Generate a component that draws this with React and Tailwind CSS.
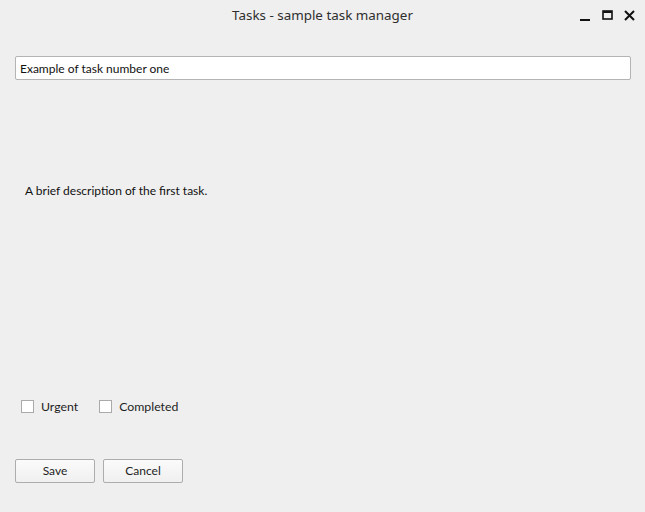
export default function App() {
  return (
    <div className="w-[645px] h-[512px] bg-[#efefef] flex flex-col text-[#1e1e1e]" style={{ fontFamily: '"Noto Sans", sans-serif' }}>
      {/* Title bar */}
      <div className="h-[30px] flex items-center relative shrink-0">
        <div className="flex-1 text-center text-[13.4px] text-[#2e2e2e] pt-[1px]">Tasks - sample task manager</div>
        <div className="absolute right-[10px] top-[8px] flex items-center gap-[11px]">
          <svg width="11" height="14" viewBox="0 0 11 14"><rect x="0" y="11" width="10" height="2" fill="#111" /></svg>
          <svg width="11" height="11" viewBox="0 0 11 11"><rect x="1" y="1" width="9" height="8" fill="none" stroke="#111" strokeWidth="1.6" /><rect x="1" y="1" width="9" height="2" fill="#111" /></svg>
          <svg width="11" height="11" viewBox="0 0 11 11"><path d="M1 1L10 10M10 1L1 10" stroke="#111" strokeWidth="2" /></svg>
        </div>
      </div>

      <div className="flex-1 flex flex-col px-[15px] pt-[26px] pb-[29px]" style={{ fontFamily: '"Lato", "Open Sans", sans-serif' }}>
        <input
          defaultValue="Example of task number one"
          className="w-[616px] h-[24px] px-[4px] text-[12px] bg-white border border-[#b4b4b4] rounded-[2px] outline-none text-[#111]"
          style={{ fontFamily: '"Lato", sans-serif' }}
        />
        <p className="mt-[102px] ml-[10px] text-[12px] text-[#111]">A brief description of the first task.</p>

        <div className="mt-auto flex items-center gap-[21px] ml-[6px] text-[12.3px]">
          <label className="flex items-center gap-[7px]">
            <span className="w-[13px] h-[13px] bg-white border border-[#aaa]" />
            <span>Urgent</span>
          </label>
          <label className="flex items-center gap-[7px]">
            <span className="w-[13px] h-[13px] bg-white border border-[#aaa]" />
            <span>Completed</span>
          </label>
        </div>

        <div className="mt-[43px] flex gap-[8px] text-[12px]">
          <button className="w-[80px] h-[24px] rounded-[2px] border border-[#adadad] bg-gradient-to-b from-[#fbfbfb] to-[#f0f0f0]">Save</button>
          <button className="w-[80px] h-[24px] rounded-[2px] border border-[#adadad] bg-gradient-to-b from-[#fbfbfb] to-[#f0f0f0]">Cancel</button>
        </div>
      </div>
    </div>
  );
}
